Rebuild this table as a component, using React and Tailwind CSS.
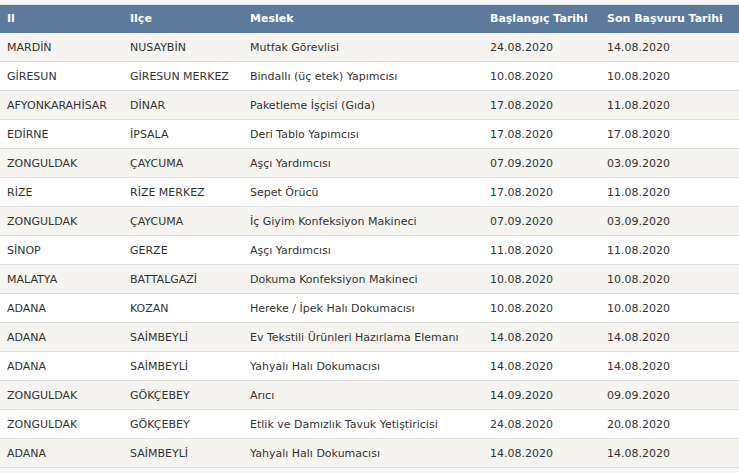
import React from "react";

const rows = [
  ["MARDİN", "NUSAYBİN", "Mutfak Görevlisi", "24.08.2020", "14.08.2020"],
  ["GİRESUN", "GİRESUN MERKEZ", "Bindallı (üç etek) Yapımcısı", "10.08.2020", "10.08.2020"],
  ["AFYONKARAHİSAR", "DİNAR", "Paketleme İşçisi (Gıda)", "17.08.2020", "11.08.2020"],
  ["EDİRNE", "İPSALA", "Deri Tablo Yapımcısı", "17.08.2020", "17.08.2020"],
  ["ZONGULDAK", "ÇAYCUMA", "Aşçı Yardımcısı", "07.09.2020", "03.09.2020"],
  ["RİZE", "RİZE MERKEZ", "Sepet Örücü", "17.08.2020", "11.08.2020"],
  ["ZONGULDAK", "ÇAYCUMA", "İç Giyim Konfeksiyon Makineci", "07.09.2020", "03.09.2020"],
  ["SİNOP", "GERZE", "Aşçı Yardımcısı", "11.08.2020", "11.08.2020"],
  ["MALATYA", "BATTALGAZİ", "Dokuma Konfeksiyon Makineci", "10.08.2020", "10.08.2020"],
  ["ADANA", "KOZAN", "Hereke / İpek Halı Dokumacısı", "10.08.2020", "10.08.2020"],
  ["ADANA", "SAİMBEYLİ", "Ev Tekstili Ürünleri Hazırlama Elemanı", "14.08.2020", "14.08.2020"],
  ["ADANA", "SAİMBEYLİ", "Yahyalı Halı Dokumacısı", "14.08.2020", "14.08.2020"],
  ["ZONGULDAK", "GÖKÇEBEY", "Arıcı", "14.09.2020", "09.09.2020"],
  ["ZONGULDAK", "GÖKÇEBEY", "Etlik ve Damızlık Tavuk Yetiştiricisi", "24.08.2020", "20.08.2020"],
  ["ADANA", "SAİMBEYLİ", "Yahyalı Halı Dokumacısı", "14.08.2020", "14.08.2020"],
];

const cols = "grid grid-cols-[123px_120px_240px_117px_139px]";

export default function App() {
  return (
    <div
      className="w-[739px] h-[473px] overflow-hidden bg-[#f6f6f6] text-[11px] text-[#333]"
      style={{ fontFamily: "Verdana, 'DejaVu Sans', sans-serif" }}
    >
      <div className="h-[4px] bg-[#f8f8f8]" />
      <div className="h-[1px] bg-[#e4e4e4]" />
      <div className={`${cols} h-[28px] items-center bg-[#5b7a9c] text-white font-bold`}>
        <div className="pl-[7px]">Il</div>
        <div className="pl-[7px]">Ilçe</div>
        <div className="pl-[7px]">Meslek</div>
        <div className="pl-[7px]">Başlangıç Tarihi</div>
        <div className="pl-[7px]">Son Başvuru Tarihi</div>
      </div>
      {rows.map((r, i) => (
        <div
          key={i}
          className={`${cols} h-[29px] pt-[3px] items-center border-b border-[#dedede] ${
            i % 2 === 0 ? "bg-[#f5f4f0]" : "bg-white"
          }`}
        >
          {r.map((c, j) => (
            <div key={j} className="pl-[7px] whitespace-nowrap">
              {c}
            </div>
          ))}
        </div>
      ))}
    </div>
  );
}
